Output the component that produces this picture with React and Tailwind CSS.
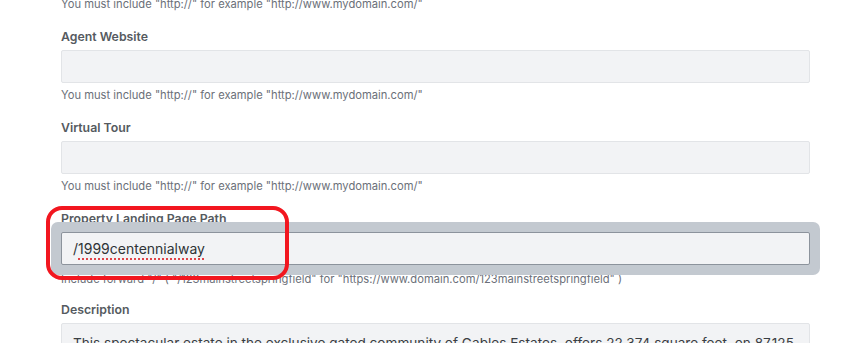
import React from "react";

const HELP_URL = 'You must include "http://" for example "http://www.mydomain.com/"';

const Field = ({ label, help, helpClass = "mt-[4px]", children }) => (
  <div className="flex flex-col">
    <label className="text-[12.3px] leading-[16px] font-semibold text-[#555a60] mb-[5px]">{label}</label>
    {children}
    {help && <p className={`relative ${helpClass} text-[11.2px] leading-[16px] text-[#6b7079] whitespace-nowrap`}>{help}</p>}
  </div>
);

const EmptyInput = () => (
  <div className="h-[33px] bg-[#f2f3f5] border border-[#e2e4e7] rounded-[2px]" />
);

export default function App() {
  return (
    <div className="w-[868px] h-[343px] overflow-hidden bg-white" style={{ fontFamily: "Inter, 'Liberation Sans', sans-serif" }}>
      <div className="pl-[61px] pr-[58px] mt-[-4px] flex flex-col gap-[17px]">
        <p className="text-[11.2px] leading-[16px] text-[#6b7079]">{HELP_URL}</p>

        <Field label="Agent Website" help={HELP_URL}>
          <EmptyInput />
        </Field>

        <Field label="Virtual Tour" help={HELP_URL}>
          <EmptyInput />
        </Field>

        <div className="relative">
          <Field
            label="Property Landing Page Path"
            helpClass="mt-[6px] mb-[-2px]"
            help={'Include forward "/" ( "/123mainstreetspringfield" for "https://www.domain.com/123mainstreetspringfield" )'}
          >
            <div className="relative z-10 h-[33px] flex items-center pl-[11px] bg-[#f2f3f5] border border-[#8c939c] rounded-[2px] shadow-[0_0_0_10px_#c3c9d0] text-[14px] text-[#2f3337]">
              <span>/</span>
              <span className="underline decoration-dotted decoration-[#e0454a] decoration-[2px] underline-offset-[4px]">1999centennialway</span>
            </div>
          </Field>
          <div className="absolute z-20 left-[-15px] top-[-5px] w-[243px] h-[74px] border-[4px] border-[#f2161f] rounded-[16px] pointer-events-none" />
        </div>

        <Field label="Description">
          <div className="h-[60px] bg-[#f2f3f5] border border-[#e2e4e7] rounded-[2px] px-[11px] pt-[8px] text-[13.6px] leading-[22px] text-[#3a3e43] whitespace-nowrap overflow-hidden">
            This spectacular estate in the exclusive gated community of Gables Estates, offers 22,374 square feet, on 87,125
          </div>
        </Field>
      </div>
    </div>
  );
}
